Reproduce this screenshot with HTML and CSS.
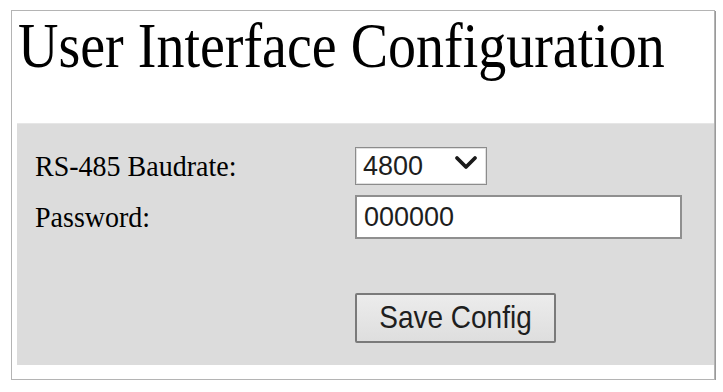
FILE: index.html
```html
<!DOCTYPE html>
<html>
<head>
<meta charset="utf-8">
<title>User Interface Configuration</title>
<link rel="stylesheet" href="styles.css">
</head>
<body>
<div class="frame">
  <h1 class="title"><span class="title-text">User Interface Configuration</span></h1>
  <form class="panel">
    <div class="row">
      <label class="label" for="baud"><span class="label-text">RS-485 Baudrate:</span></label>
      <div class="select-wrap">
        <select id="baud" class="select">
          <option>4800</option>
          <option>9600</option>
          <option>19200</option>
        </select>
        <svg class="chevron" width="24" height="16" viewBox="0 0 24 16"><path d="M3 3 L12 12 L21 3" fill="none" stroke="#1a1a1a" stroke-width="3.8" stroke-linecap="round" stroke-linejoin="round"/></svg>
      </div>
    </div>
    <div class="row">
      <label class="label" for="pwd"><span class="label-text">Password:</span></label>
      <input id="pwd" class="input" type="text" value="000000">
    </div>
    <div class="row row-button">
      <span class="label"></span>
      <button type="button" class="button"><span class="button-text">Save Config</span></button>
    </div>
  </form>
</div>
</body>
</html>
```
FILE: styles.css
```css
html, body {
  margin: 0;
  padding: 0;
  background: #ffffff;
}
.frame {
  margin: 10px 8px 0 11px;
  height: 370px;
  border: 1px solid #b4b4b4;
  box-shadow: 1px 1px 0 #9a9a9a;
  display: flex;
  flex-direction: column;
  box-sizing: border-box;
}
.title {
  margin: 0;
  height: 112px;
  padding: 2px 0 0 6px;
  box-sizing: border-box;
  font-family: "Liberation Serif", serif;
  font-weight: normal;
  font-size: 56px;
  line-height: 1;
  color: #000;
}
.title-text {
  display: inline-block;
  transform-origin: left top;
  transform: scaleY(1.14);
}
.panel {
  margin: 0 0 0 5px;
  height: 242px;
  background: #dcdcdc;
  border-top: 1px solid #e6e6e6;
  box-sizing: border-box;
  padding: 23px 0 0 18px;
  display: flex;
  flex-direction: column;
  gap: 10px;
  font-family: "Liberation Serif", serif;
}
.row {
  display: flex;
  align-items: center;
}
.row-button {
  margin-top: 44px;
}
.label {
  width: 320px;
  font-size: 28px;
  color: #000;
}
.label-text {
  display: inline-block;
  transform: scaleY(1.08);
}
.select-wrap {
  position: relative;
  width: 132px;
  height: 38px;
}
.select {
  appearance: none;
  -webkit-appearance: none;
  width: 132px;
  height: 38px;
  margin: 0;
  padding: 0 0 0 7px;
  box-sizing: border-box;
  border: 1px solid #8c8c8c;
  box-shadow: inset 0 0 0 1px #e0e0e0;
  background: #ffffff;
  font-family: "Liberation Sans", Arial, sans-serif;
  font-size: 27px;
  color: #1e1e1e;
  border-radius: 0;
}
.chevron {
  position: absolute;
  left: 99px;
  top: 8px;
  pointer-events: none;
}
.input {
  width: 327px;
  height: 44px;
  margin: 0;
  padding: 0 0 0 7px;
  box-sizing: border-box;
  border: 2px solid #8f8f8f;
  background: #ffffff;
  font-family: "Liberation Sans", Arial, sans-serif;
  font-size: 27px;
  color: #1e1e1e;
  border-radius: 0;
}
.button {
  width: 201px;
  height: 50px;
  margin: 0;
  padding: 0;
  box-sizing: border-box;
  border: 2px solid #7a7a7a;
  border-radius: 2px;
  background: linear-gradient(#ececec, #dedede);
  font-family: "Liberation Sans", Arial, sans-serif;
  font-size: 28px;
  color: #1e1e1e;
}
.button-text {
  display: inline-block;
  transform: scaleY(1.12);
}
```
